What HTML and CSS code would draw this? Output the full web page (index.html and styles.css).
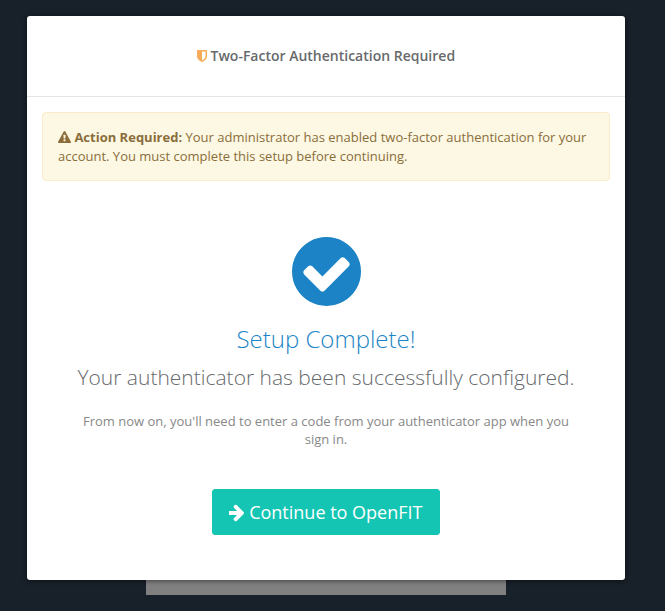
FILE: index.html
```
<!DOCTYPE html>
<html lang="en">
<head>
    <meta charset="UTF-8">
    <title>Two-Factor Authentication Required</title>
    <meta name="viewport" content="width=device-width, initial-scale=1.0">
    <link rel="stylesheet" href="styles.css">
</head>
<body>
    <main class="modal" role="dialog" aria-labelledby="modal-title">
        <header class="modal-header">
            <h4 class="modal-title" id="modal-title"><svg class="icon-shield" viewBox="256 128 1280 1536" aria-hidden="true"><path d="M1344 960v-640h-448v1137q119-63 213-137 235-184 235-360zm192-768v768q0 86-33.5 170.5t-83 150-118 127.5-126.5 103-121 77.5-89.5 49.5-42.5 20q-12 6-26 6t-26-6q-16-7-42.5-20t-89.5-49.5-121-77.5-126.5-103-118-127.5-83-150-33.5-170.5v-768q0-26 19-45t45-19h1152q26 0 45 19t19 45z"/></svg> Two-Factor Authentication Required</h4>
        </header>
        <div class="modal-body">
            <div class="alert">
                <svg class="icon-warning" viewBox="0 0 1792 1792" aria-hidden="true"><path d="M1024 1375v-190q0-14-9.5-23.5t-22.5-9.5h-192q-13 0-22.5 9.5t-9.5 23.5v190q0 14 9.5 23.5t22.5 9.5h192q13 0 22.5-9.5t9.5-23.5zm-2-374l18-459q0-12-10-19-13-11-24-11h-220q-11 0-24 11-10 7-10 21l17 457q0 10 10 16.5t24 6.5h185q14 0 23.5-6.5t10.5-16.5zm-14-934l768 1408q35 63-2 126-17 29-46.5 46t-63.5 17h-1536q-34 0-63.5-17t-46.5-46q-37-63-2-126l768-1408q17-31 47-49t65-18 65 18 47 49z"/></svg>
                <strong>Action Required:</strong> Your administrator has enabled two-factor authentication for your account. You must complete this setup before continuing.
            </div>
            <div class="complete">
                <svg class="icon-check" viewBox="128 128 1536 1536" aria-hidden="true"><path d="M1412 734q0-28-18-46l-91-90q-19-19-45-19t-45 19l-408 407-226-226q-19-19-45-19t-45 19l-91 90q-18 18-18 46 0 27 18 45l362 362q19 19 45 19 27 0 46-19l543-543q18-18 18-45zm252 162q0 209-103 385.5t-279.5 279.5-385.5 103-385.5-103-279.5-279.5-103-385.5 103-385.5 279.5-279.5 385.5-103 385.5 103 279.5 279.5 103 385.5z"/></svg>
                <h2>Setup Complete!</h2>
                <p class="lead">Your authenticator has been successfully configured.</p>
                <p class="note">From now on, you'll need to enter a code from your authenticator app when you sign in.</p>
                <button type="button" class="btn">
                    <svg class="icon-arrow" viewBox="192 128 1408 1664" aria-hidden="true"><path d="M1600 960q0 54-37 91l-651 651q-39 37-91 37-51 0-90-37l-75-75q-38-38-38-91t38-91l293-293h-704q-52 0-84.5-37.5t-32.5-90.5v-128q0-53 32.5-90.5t84.5-37.5h704l-293-294q-38-36-38-90t38-90l75-75q38-38 90-38 53 0 91 38l651 651q37 35 37 90z"/></svg>
                    Continue to OpenFIT
                </button>
            </div>
        </div>
    </main>
    <div class="page-behind"></div>
</body>
</html>
```

FILE: styles.css
```
* {
    box-sizing: border-box;
}
body {
    margin: 0;
    padding: 16px 40px 16px 27px;
    background-color: #182029;
    color: #676a6c;
    font-family: "Open Sans", "Noto Sans", sans-serif;
    font-size: 13px;
    line-height: 19px;
}
svg {
    fill: currentColor;
}
.modal {
    position: relative;
    background-color: #fff;
    border-radius: 3px;
    box-shadow: 0 1px 5px rgba(0, 0, 0, 0.5);
}
.modal-header {
    padding: 30px 15px;
    border-bottom: 1px solid #e5e5e5;
    text-align: center;
}
.modal-title {
    margin: 0;
    font-size: 14px;
    font-weight: 600;
    line-height: 20px;
}
.icon-shield {
    width: 10px;
    height: 12px;
    color: #f8ac59;
    vertical-align: -1px;
}
.modal-body {
    padding: 15px;
}
.alert {
    padding: 15px 15px 14px;
    border: 1px solid #faebcc;
    border-radius: 4px;
    background-color: #fcf8e3;
    color: #8a6d3b;
}
.icon-warning {
    width: 13px;
    height: 13px;
    vertical-align: -2px;
}
.complete {
    padding: 56px 30px 30px;
    text-align: center;
}
.icon-check {
    display: block;
    width: 69px;
    height: 69px;
    margin: 0 auto;
    color: #1c84c6;
}
h2 {
    margin: 20px 0 10px;
    color: #1c84c6;
    font-size: 24px;
    font-weight: 300;
    line-height: 26px;
}
.lead {
    margin: 0 0 20px;
    font-size: 21px;
    font-weight: 300;
    line-height: 30px;
}
.note {
    margin: 0 0 41px;
    color: #888;
    line-height: 18px;
}
.btn {
    padding: 10px 16px;
    border: 1px solid #13c5b2;
    border-radius: 3px;
    background-color: #13c5b2;
    color: #fff;
    font-family: inherit;
    font-size: 18px;
    line-height: 24px;
    cursor: pointer;
}
.icon-arrow {
    width: 15px;
    height: 18px;
    vertical-align: -3px;
}
.page-behind {
    width: 360px;
    max-width: 100%;
    height: 15px;
    margin: 0 auto;
    background-color: #808080;
}
```
